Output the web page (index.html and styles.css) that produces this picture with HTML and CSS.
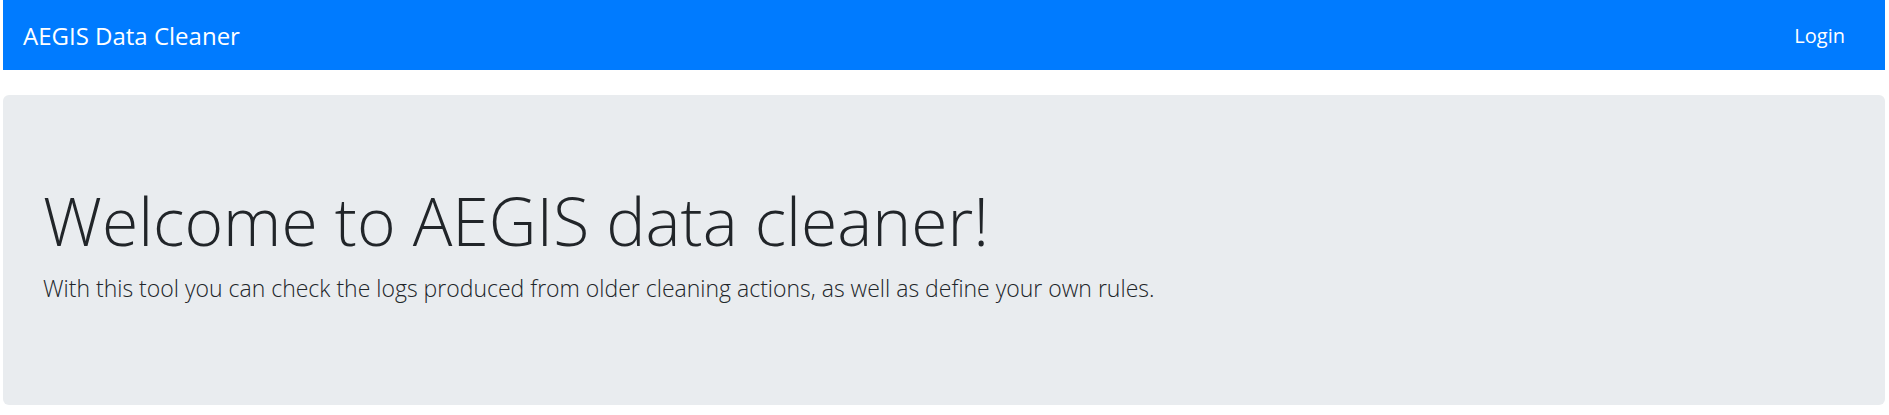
FILE: index.html
```html
<!DOCTYPE html>
<html lang="en">
<head>
<meta charset="utf-8">
<meta name="viewport" content="width=device-width, initial-scale=1">
<title>AEGIS Data Cleaner</title>
<link rel="stylesheet" href="styles.css">
</head>
<body>
<header class="navbar">
<a class="brand" href="#">AEGIS Data Cleaner</a>
<nav class="nav"><a class="nav-link" href="#">Login</a></nav>
</header>
<main class="jumbotron">
<h1 class="title">Welcome to AEGIS data cleaner!</h1>
<p class="lead">With this tool you can check the logs produced from older cleaning actions, as well as define your own rules.</p>
</main>
</body>
</html>
```
FILE: styles.css
```css
* {
  box-sizing: border-box;
}

body {
  margin: 0 4px 0 3px;
  background: #fff;
  color: #212529;
  font-family: "Segoe UI", "Open Sans", sans-serif;
}

.navbar {
  display: flex;
  align-items: center;
  justify-content: space-between;
  padding: 17px 40px 15px 20px;
  background: #007bff;
}

.brand,
.nav-link {
  color: #fff;
  text-decoration: none;
}

.brand {
  font-size: 24px;
  line-height: 38px;
}

.nav-link {
  font-size: 20px;
  line-height: 30px;
}

.jumbotron {
  margin-top: 25px;
  padding: 80px 40px;
  border-radius: 6px;
  background: #e9ecef;
}

.title {
  margin: 0 0 5px;
  font-size: 66px;
  font-weight: 300;
  line-height: 90px;
}

.lead {
  margin: 0 0 19px;
  font-size: 23px;
  font-weight: 300;
  line-height: 36px;
}
```
